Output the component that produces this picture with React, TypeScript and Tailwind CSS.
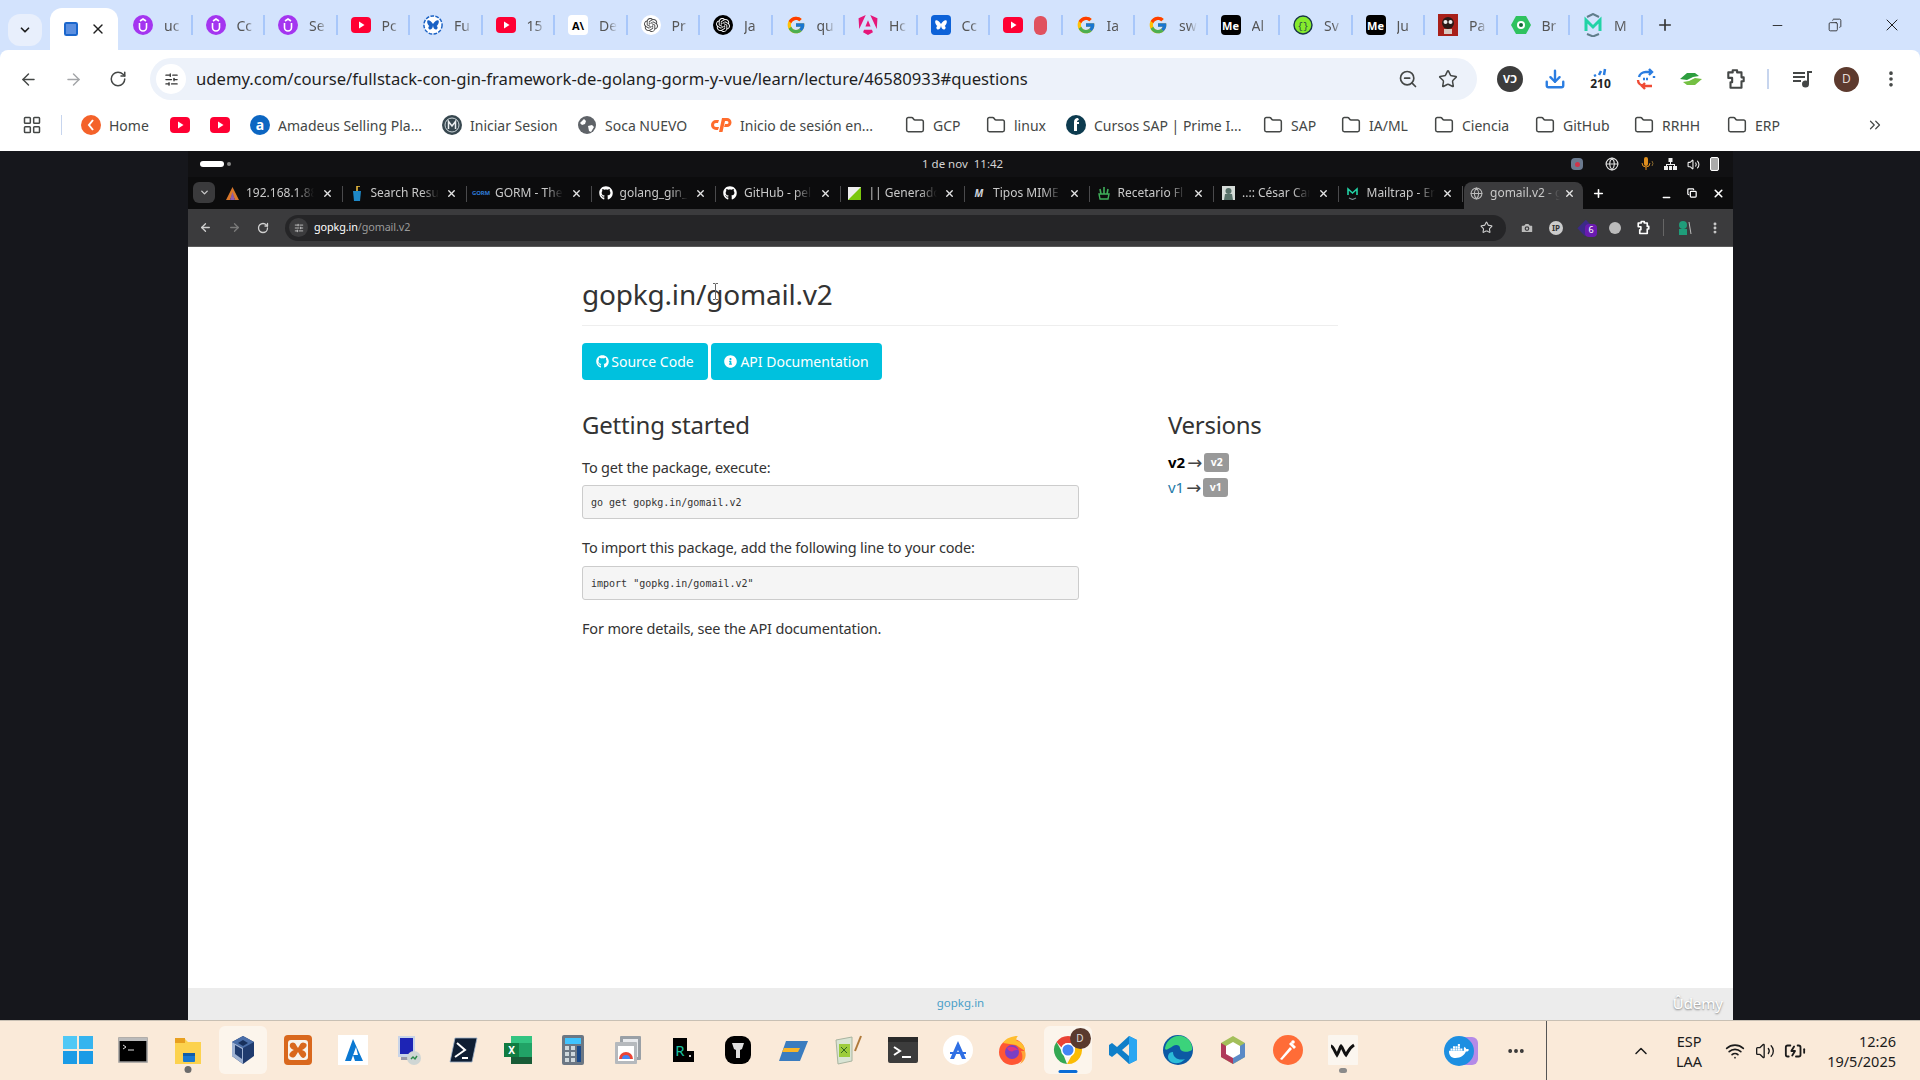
import React from 'react';
import { FaGithub, FaInfoCircle, FaDocker } from 'react-icons/fa';
import { FcGoogle } from 'react-icons/fc';
import { SiOpenai, SiAngular } from 'react-icons/si';
import {
  ArrowLeft, ArrowRight, RotateCw, ZoomOut, Star, ChevronDown, ChevronUp, X, Plus, Minus,
  Copy, LayoutGrid, Folder, SlidersHorizontal, MoreVertical, Download, ChevronsRight,
  Globe, Wifi, Volume2, BatteryCharging, MoreHorizontal, Camera, Square,
} from 'lucide-react';

const UI = "font-['Noto_Sans',sans-serif]";

const Yt = () => (
  <svg width="20" height="16" viewBox="0 0 20 16"><rect width="20" height="16" rx="4" fill="#ff0033" /><path d="M8 4.500 13.500 8 8 11.500z" fill="#fff" /></svg>
);
const Udemy = () => (
  <svg width="20" height="20" viewBox="0 0 20 20"><circle cx="10" cy="10" r="10" fill="#a435f0" /><path d="M6.500 8v4.500a3.500 3.500 0 0 0 7 0V8M7 6l3-2 3 2" fill="none" stroke="#fff" strokeWidth="1.600" /></svg>
);
const Butterfly = ({ ring }: { ring?: boolean }) => (
  <svg width="22" height="22" viewBox="0 0 22 22">
    {ring ? <circle cx="11" cy="11" r="10" fill="#fff" stroke="#1b62c4" strokeWidth="1.600" strokeDasharray="4 1.500" /> : <rect width="22" height="22" rx="4" fill="#0d62d8" />}
    <path d="M11 10C9 6 6 5 5 6s0 5 2 6c-2 1-1 4 1 4s3-3 3-5c0 2 1 5 3 5s3-3 1-4c2-1 3-5 2-6s-4 0-6 4z" fill={ring ? '#1b62c4' : '#fff'} />
  </svg>
);
const Square20 = ({ bg, fg, text }: { bg: string; fg: string; text: string }) => (
  <span className={`flex w-5 h-5 items-center justify-center rounded-sm text-[11px] font-bold leading-none ${bg} ${fg}`}>{text}</span>
);
const OpenAi = ({ dark }: { dark?: boolean }) => (
  <span className={`flex w-5 h-5 items-center justify-center rounded-full ${dark ? 'bg-black text-white' : 'bg-white text-[#444]'}`}><SiOpenai size={14} /></span>
);
const ExtPuzzle = ({ size, color, width }: { size: number; color: string; width: number }) => (
  <svg width={size} height={size} viewBox="0 0 20 20" fill="none" stroke={color} strokeWidth={width} strokeLinejoin="round">
    <path d="M3 4h4V2h4v2h4v4.500h2v3.500h-2v6H5v-5h1.500V9H3z" />
  </svg>
);

const tabs: { icon: React.ReactNode; text: string }[] = [
  { icon: <Udemy />, text: 'uc' },
  { icon: <Udemy />, text: 'Cc' },
  { icon: <Udemy />, text: 'Se' },
  { icon: <Yt />, text: 'Pc' },
  { icon: <Butterfly ring />, text: 'Fu' },
  { icon: <Yt />, text: '15' },
  { icon: <Square20 bg="bg-white" fg="text-black" text="A\" />, text: 'De' },
  { icon: <OpenAi />, text: 'Pr' },
  { icon: <OpenAi dark />, text: 'Ja' },
  { icon: <FcGoogle size={20} />, text: 'qu' },
  { icon: <SiAngular size={20} className="text-[#e5177a]" />, text: 'Hc' },
  { icon: <Butterfly />, text: 'Cc' },
  { icon: <Yt />, text: '' },
  { icon: <FcGoogle size={20} />, text: 'Ia' },
  { icon: <FcGoogle size={20} />, text: 'sw' },
  { icon: <Square20 bg="bg-black" fg="text-white" text="Me" />, text: 'Al' },
  {
    icon: <svg width="20" height="20" viewBox="0 0 20 20"><circle cx="10" cy="10" r="9" fill="#85ea2d" stroke="#173647" strokeWidth="1.400" /><text x="10" y="13.500" fontSize="9" textAnchor="middle" fill="#173647" fontFamily="Liberation Mono">{'{}'}</text></svg>,
    text: 'Sv',
  },
  { icon: <Square20 bg="bg-black" fg="text-white" text="Me" />, text: 'Ju' },
  {
    icon: <svg width="20" height="22" viewBox="0 0 20 22"><rect width="20" height="22" fill="#a8201a" /><circle cx="10" cy="9" r="6" fill="#2a1a18" /><circle cx="7.500" cy="8" r="2" fill="#eee" /><circle cx="12.500" cy="8" r="2" fill="#eee" /><path d="M6 15h8v5H6z" fill="#d8c8c0" /></svg>,
    text: 'Pa',
  },
  {
    icon: <svg width="20" height="22" viewBox="0 0 20 22"><path d="M5 2h10l5 9-5 9H5l-5-9z" fill="#2fc25f" /><circle cx="10" cy="11" r="4" fill="#fff" /><circle cx="10" cy="11" r="2" fill="#163" /></svg>,
    text: 'Br',
  },
  {
    icon: <svg width="20" height="24" viewBox="0 0 20 24"><path d="M3 18V7l7 7 7-7v11" fill="none" stroke="#22d3a6" strokeWidth="3" /><path d="M4 4l6-3 6 3M4 21l6 2.500 6-2.500" fill="none" stroke="#607d8b" strokeWidth="2" /></svg>,
    text: 'M',
  },
];

const innerTabs: { icon: React.ReactNode; text: string }[] = [
  { icon: <svg width="13" height="13" viewBox="0 0 13 13"><path d="M6.500 0 13 13H9L6.500 7 4 13H0z" fill="#d9772b" /><path d="M6.500 5 9 13H4z" fill="#8a5bb0" /></svg>, text: '192.168.1.88' },
  { icon: <svg width="10" height="15" viewBox="0 0 10 15"><path d="M1 5h8l-1 10H2z" fill="#1e88c7" /><path d="M5 5V0h3" fill="none" stroke="#f5c542" strokeWidth="1.500" /></svg>, text: 'Search Results' },
  { icon: <span className="text-[6px] font-bold text-[#2f7ad6] leading-none tracking-tight">GORM</span>, text: 'GORM - The' },
  { icon: <FaGithub size={14} className="text-white" />, text: 'golang_gin_' },
  { icon: <FaGithub size={14} className="text-white" />, text: 'GitHub - peli' },
  { icon: <svg width="13" height="13" viewBox="0 0 13 13"><rect width="13" height="13" fill="#eee" /><path d="M13 0v13H0z" fill="#7ac70c" /></svg>, text: '|| Generador' },
  { icon: <span className="text-[10px] font-bold italic text-gray-300 leading-none">M</span>, text: 'Tipos MIME' },
  { icon: <svg width="14" height="14" viewBox="0 0 14 14"><path d="M2 8h10l-1 5H3z" fill="none" stroke="#3fae5a" strokeWidth="1.400" /><path d="M7 8V1M4 8 3 3M10 8l1-5" stroke="#3fae5a" strokeWidth="1.600" /></svg>, text: 'Recetario Fl' },
  { icon: <svg width="13" height="14" viewBox="0 0 13 14"><rect width="13" height="14" fill="#d5dcd8" /><circle cx="6.500" cy="5" r="3" fill="#58726a" /><path d="M2 14l1-6h7l1 6z" fill="#58726a" /></svg>, text: '..:: César Can' },
  { icon: <svg width="13" height="14" viewBox="0 0 13 14"><path d="M2 9V3l4.500 4L11 3v6" fill="none" stroke="#22d3a6" strokeWidth="1.600" /><path d="M3 12l3.500 1.500L10 12" fill="none" stroke="#7a8a90" strokeWidth="1.200" /></svg>, text: 'Mailtrap - En' },
];

const folder = <Folder size={20} strokeWidth={1.8} className="text-[#444746]" />;

const bookmarks: { w: string; icon: React.ReactNode; text?: string }[] = [
  {
    w: 'w-[89px]',
    icon: <svg width="20" height="20" viewBox="0 0 20 20"><circle cx="10" cy="10" r="10" fill="#f4622a" /><path d="M12 5 8 10l4 5" fill="none" stroke="#fff" strokeWidth="2" /></svg>,
    text: 'Home',
  },
  { w: 'w-[40px]', icon: <Yt /> },
  { w: 'w-[40px]', icon: <Yt /> },
  {
    w: 'w-[192px]',
    icon: <svg width="20" height="20" viewBox="0 0 20 20"><circle cx="10" cy="10" r="10" fill="#0c66c2" /><text x="10" y="15" fontSize="14" fontWeight="bold" textAnchor="middle" fill="#fff" fontFamily="Noto Sans">a</text></svg>,
    text: 'Amadeus Selling Pla...',
  },
  {
    w: 'w-[135px]',
    icon: <svg width="20" height="20" viewBox="0 0 20 20"><circle cx="10" cy="10" r="10" fill="#37474f" /><circle cx="10" cy="10" r="7" fill="none" stroke="#cfd8dc" strokeWidth="1" /><path d="M6.500 14V6.500L10 11l3.500-4.500V14" fill="none" stroke="#eceff1" strokeWidth="1.500" /></svg>,
    text: 'Iniciar Sesion',
  },
  {
    w: 'w-[133px]',
    icon: <svg width="20" height="20" viewBox="0 0 20 20"><circle cx="10" cy="10" r="9" fill="#5f6368" /><path d="M3 8l4-4 2 2-1 3-3 1zM11 11l4-1 2 2-3 5-2-1z" fill="#fff" /></svg>,
    text: 'Soca NUEVO',
  },
  {
    w: 'w-[195px]',
    icon: <svg width="22" height="16" viewBox="0 0 22 16"><path d="M9 3H6a5 5 0 0 0 0 10h2l1-3H6a2 2 0 0 1 0-4h2z" fill="#ff6c2c" /><path d="M9 15 12 1h5a4.500 4.500 0 0 1 0 9h-3l1-3h2a1.500 1.500 0 0 0 0-3h-2l-2.500 11z" fill="#ff6c2c" /></svg>,
    text: 'Inicio de sesión en...',
  },
  { w: 'w-[81px]', icon: folder, text: 'GCP' },
  { w: 'w-[80px]', icon: folder, text: 'linux' },
  {
    w: 'w-[197px]',
    icon: <svg width="20" height="22" viewBox="0 0 20 22"><circle cx="10" cy="11" r="10" fill="#0d3b4f" /><path d="M12 4c-3 0-4 2-4 4v9h3V10h2V8h-2c0-1 .5-2 2-2z" fill="#fff" /></svg>,
    text: 'Cursos SAP | Prime I...',
  },
  { w: 'w-[78px]', icon: folder, text: 'SAP' },
  { w: 'w-[93px]', icon: folder, text: 'IA/ML' },
  { w: 'w-[101px]', icon: folder, text: 'Ciencia' },
  { w: 'w-[99px]', icon: folder, text: 'GitHub' },
  { w: 'w-[93px]', icon: folder, text: 'RRHH' },
  { w: 'w-[100px]', icon: folder, text: 'ERP' },
];

const Ic = ({ children }: { children: React.ReactNode }) => (
  <svg width="30" height="30" viewBox="0 0 30 30">{children}</svg>
);

const taskIcons: { node: React.ReactNode; tile?: boolean; dot?: string }[] = [
  { node: <Ic><path d="M0 1h14v13H0zM16 1h14v13H16zM0 16h14v13H0zM16 16h14v13H16z" fill="#1a9be6" /><path d="M0 1h14v13H0z" fill="#50c8f5" /><path d="M16 1h14v13H16z" fill="#35b4ef" /></Ic> },
  { node: <Ic><rect x="1" y="3" width="28" height="24" fill="#000" stroke="#9a9a9a" strokeWidth="1.500" /><rect x="1" y="3" width="28" height="3" fill="#bbb" /><path d="M5 10l3 2-3 2M10 15h6" stroke="#ddd" strokeWidth="1" fill="none" /></Ic> },
  { node: <Ic><path d="M2 4h10l3 3h13v22H2z" fill="#fcd24e" /><path d="M2 3h10v5H2z" fill="#e8a020" /><rect x="10" y="18" width="12" height="9" rx="1" fill="#1878d0" /><rect x="10" y="18" width="12" height="3" fill="#0f5da8" /></Ic>, dot: 'bg-[#6b6b6b]' },
  { node: <Ic><path d="M15 1l11 6v14l-11 8L4 21V7z" fill="#1f3b6e" /><path d="M15 1l11 6-11 6L4 7z" fill="#4a6ea8" /><path d="M15 13v16L4 21V7z" fill="#9fb3d4" /><path d="M15 5l5 3-5 3-5-3z" fill="#17305c" /><path d="M7 10l7 4v10l-7-5z" fill="#1f3b6e" /></Ic>, tile: true },
  { node: <Ic><rect x="1" y="0" width="28" height="30" rx="4" fill="#d9681d" /><rect x="5" y="5" width="20" height="20" rx="3" fill="#f7f3ec" /><path d="M8 8c4-2 5 2 7 5 2-3 3-7 7-5s0 6-3 7c3 1 6 4 3 7s-5-2-7-5c-2 3-3 7-7 5s0-6 3-7c-3-1-6-4-3-7z" fill="#d9681d" /></Ic> },
  { node: <Ic><rect width="30" height="30" fill="#fff" /><path d="M15 4 7 26h6l5-14 2 8h-5l2 6h8z" fill="#0a78d2" /></Ic> },
  { node: <Ic><rect x="5" y="1" width="17" height="21" fill="#c8d4e8" /><rect x="7" y="3" width="13" height="16" fill="#1d24b5" /><path d="M8 22h14l1 3H8z" fill="#99a" /><circle cx="21" cy="23" r="7" fill="#cfd6d4" /><path d="M18 24l2-2 2 2 2-3" stroke="#2a8a4a" strokeWidth="1.400" fill="none" /></Ic> },
  { node: <Ic><path d="M7 3h22l-5 24H2z" fill="#0f1e33" stroke="#9db2cc" strokeWidth="0.800" /><path d="M9 8l8 7-10 7" fill="none" stroke="#fff" strokeWidth="2" /><path d="M14 23h6" stroke="#fff" strokeWidth="2" /></Ic> },
  { node: <Ic><path d="M8 1h21v28H8z" fill="#21a366" /><path d="M8 1h21v7H8z" fill="#33c481" /><path d="M18 8h11v7H18z" fill="#21a366" /><path d="M8 22h21v7H8z" fill="#185c37" /><rect x="1" y="8" width="15" height="14" fill="#107c41" /><text x="8.500" y="19" fontSize="10" fontWeight="bold" textAnchor="middle" fill="#fff" fontFamily="Noto Sans">X</text></Ic> },
  { node: <Ic><rect x="4" y="0" width="22" height="30" rx="2" fill="#6b7784" /><rect x="7" y="3" width="16" height="6" fill="#40c4ff" /><path d="M7 11h4v4H7zM13 11h4v4h-4zM7 17h4v4H7zM13 17h4v4h-4zM7 23h4v4H7zM13 23h4v4h-4z" fill="#cfd8dc" /><path d="M19 11h4v16h-4z" fill="#1a4a8a" /></Ic> },
  { node: <Ic><rect x="7" y="1" width="21" height="24" rx="1" fill="#9aa0a6" /><rect x="10" y="4" width="15" height="18" fill="#e8eaed" /><rect x="2" y="7" width="22" height="22" rx="1" fill="#b5b9bd" /><rect x="5" y="11" width="16" height="15" fill="#fff" /><path d="M6 24a7 7 0 0 1 14 0z" fill="#ea4335" /><path d="M9 24a4 4 0 0 1 8 0z" fill="#4285f4" /></Ic> },
  { node: <Ic><rect x="5" y="3" width="14" height="24" fill="#000" /><rect x="19" y="16" width="7" height="11" fill="#000" /><text x="12" y="21" fontSize="15" textAnchor="middle" fill="#18c3a0" fontFamily="Noto Sans">R</text><rect x="21" y="20" width="2" height="2" fill="#ccc" /></Ic> },
  { node: <Ic><rect x="2" y="1" width="26" height="28" rx="9" fill="#000" /><path d="M9 8h12l-2 6-2 1v8h-4v-8l-2-1z" fill="#ddd" /></Ic> },
  { node: <Ic><path d="M8 6h22l-8 20H1z" fill="#3a7cbf" /><path d="M6 13h16l-2 4H4z" fill="#f7b52a" /></Ic> },
  { node: <Ic><path d="M3 5l16-3v24l-14 3z" fill="#d9e4d4" stroke="#a8b4a0" /><rect x="6" y="9" width="11" height="13" fill="#9ccc3c" /><path d="M8 12l6 6M14 12l-6 6" stroke="#336622" /><path d="M22 16 28 1" stroke="#b07a3a" strokeWidth="2" /></Ic> },
  { node: <Ic><rect x="0" y="2" width="30" height="26" rx="2" fill="#3c3c3c" /><rect x="0" y="2" width="30" height="5" fill="#2a2a2a" /><path d="M6 12l6 4-6 4" fill="none" stroke="#fff" strokeWidth="2" /><path d="M14 22h9" stroke="#fff" strokeWidth="2" /></Ic> },
  { node: <Ic><circle cx="15" cy="15" r="15" fill="#fff" /><path d="M15 6l8 18h-4l-4-9-4 9H7z" fill="#2f6fe4" /><path d="M7 18h16" stroke="#2f6fe4" strokeWidth="2" /></Ic> },
  {
    node: (
      <Ic>
        <circle cx="14" cy="17" r="13" fill="#ff5634" />
        <path d="M5 8c3-5 9-7 15-7-2 2-2 4-1 5 4 0 8 5 8 10l-9-6z" fill="#ffbd2e" />
        <path d="M27 16c2 6-1 11-5 13 3-4 3-9 1-13z" fill="#ffa436" />
        <circle cx="14" cy="17" r="7" fill="#7b3fc4" />
        <path d="M9 13c3-2 8-2 11 2-2 0-4 0-5 1s-4 1-6-3z" fill="#e0357e" />
      </Ic>
    ),
  },
  {
    node: (
      <span className="relative block w-[30px] h-[30px]">
        <svg width="30" height="30" viewBox="0 0 30 30">
          <path d="M15 1a14 14 0 0 1 12 7H15a7 7 0 0 0-6.500 4.500L3.500 7A14 14 0 0 1 15 1z" fill="#ea4335" />
          <path d="M3.500 7l6.200 11 4.300 10.900A14 14 0 0 1 3.500 7z" fill="#34a853" />
          <path d="M27 8a14 14 0 0 1-13 21l6-11a7 7 0 0 0 0-10z" fill="#fbbc05" />
          <circle cx="15" cy="15" r="7" fill="#fff" />
          <circle cx="15" cy="15" r="5.500" fill="#4285f4" />
        </svg>
        <span className="absolute -top-[7px] -right-[8px] w-[21px] h-[21px] rounded-full bg-[#5a3a2e] text-[#ddd] text-[10px] flex items-center justify-center">D</span>
      </span>
    ),
    tile: true,
    dot: 'bg-[#0a6cd6] w-[19px]! h-[3px]! rounded-full',
  },
  {
    node: (
      <Ic>
        <path d="M21 1 29 5v20l-8 4L9 18l-5 4-3-2v-10l3-2 5 4z" fill="#0f7fc9" />
        <path d="M21 1 29 5v20l-8 4z" fill="#2aa6f2" />
        <path d="M21 9 14 15l7 6z" fill="#faead9" />
      </Ic>
    ),
  },
  { node: <Ic><circle cx="15" cy="15" r="15" fill="#0c59a4" /><path d="M2 13C4 4 12 0 18 1c7 1 12 7 11 14-4 3-12 2-12-2 0-3-4-4-7-2S2 17 2 13z" fill="#3bd37b" /><path d="M10 17c0 6 6 9 12 7-4 5-12 6-16 1-2-3-1-8 4-8z" fill="#2bbcd8" /></Ic> },
  { node: <Ic><path d="M15 1l12 7v14l-12 7-12-7V8z" fill="#a3bf5a" /><path d="M3 8v14l12 7V15z" fill="#b03a5b" /><path d="M27 8v14l-12 7V15z" fill="#5a8ac6" /><path d="M15 7l7 4v8l-7 4-7-4v-8z" fill="#fff" /></Ic> },
  {
    node: (
      <Ic>
        <circle cx="15" cy="15" r="15" fill="#ff6c37" />
        <path d="M7 24 17 12l2 2L9 25z" fill="#fff" />
        <path d="M16 9l2-2 5 5-2 2z" fill="#fff" />
        <circle cx="20" cy="7" r="1.800" fill="#fff" />
      </Ic>
    ),
  },
  { node: <Ic><rect x="-1" y="0" width="32" height="30" rx="3" fill="#fbf6ef" /><path d="M3 11c2 0 4 6 6 9 2-3 3-8 4-9 2 2 3 7 5 9 2-3 3-7 8-10" fill="none" stroke="#111" strokeWidth="3" /></Ic>, dot: 'bg-[#8a8a8a] h-[5px]! w-[8px]!' },
];

const SourceLine = ({ children }: { children: React.ReactNode }) => (
  <pre className="h-[34px] flex items-center px-[8px] bg-[#f5f5f5] border border-[#cccccc] rounded-[3px] font-['DejaVu_Sans_Mono',monospace] text-[10px] text-[#333]">{children}</pre>
);

export default function App() {
  return (
    <div className={`w-[1920px] h-[1080px] overflow-hidden flex flex-col bg-[#16171c] ${UI}`}>
      {/* windows chrome */}
      <div className="bg-[#d3e3fd] shrink-0">
        <div className="h-[50px] flex items-end text-[#444746]">
          <div className="w-[34px] h-[32px] ml-2 mb-[4px] rounded-xl bg-[#e8effc] flex items-center justify-center">
            <ChevronDown size={14} strokeWidth={3} className="text-[#1f1f1f]" />
          </div>
          <div className="w-[68px] h-[42px] ml-2 bg-white rounded-t-xl flex items-center gap-[11px] pl-[13px]">
            <Square size={16} strokeWidth={3} className="text-[#1a66cc] fill-[#5b8fe0]" />
            <X size={16} strokeWidth={2} className="text-[#1f1f1f]" />
          </div>
          <div className="w-[2px]" />
          <div className="flex h-[50px] items-center">
            {tabs.map((t, i) => (
              <div key={i} className="w-[72.5px] h-[50px] flex items-center pl-[13px] gap-[11px] relative">
                <span className="flex w-[20px] justify-center shrink-0">{t.icon}</span>
                {t.text ? (
                  <span className="w-[18px] overflow-hidden whitespace-nowrap text-[14px] text-[#555] [mask-image:linear-gradient(to_right,black_50%,transparent)]">{t.text}</span>
                ) : (
                  <span className="w-[13px] h-[19px] rounded-md bg-[#e0525f]" />
                )}
                <span className="absolute right-0 top-[15px] h-[20px] w-[2px] bg-[#a8c7fa]" />
              </div>
            ))}
          </div>
          <div className="h-[50px] w-[44px] flex items-center justify-center">
            <Plus size={18} strokeWidth={2.2} className="text-[#333]" />
          </div>
          <div className="h-[50px] flex-1 flex items-center justify-end text-[#1f1f1f]">
            <div className="w-[57px] flex justify-center"><Minus size={15} strokeWidth={1.4} /></div>
            <div className="w-[57px] flex justify-center"><Copy size={14} strokeWidth={1.4} className="-scale-x-100" /></div>
            <div className="w-[57px] flex justify-center"><X size={20} strokeWidth={1.2} /></div>
          </div>
        </div>

        <div className="bg-white rounded-t-lg">
          <div className="h-[52px] pt-[8px] flex items-start text-[#444746]">
            <div className="w-[150px] h-[42px] flex items-center pl-[19px] gap-[26px]">
              <ArrowLeft size={19} strokeWidth={1.8} />
              <ArrowRight size={19} strokeWidth={1.8} className="text-[#a3a5a8]" />
              <RotateCw size={18} strokeWidth={2} />
            </div>
            <div className="w-[1327px] h-[42px] rounded-full bg-[#edf2fa] flex items-center pl-[6px]">
              <span className="w-[30px] h-[30px] rounded-full bg-white flex items-center justify-center">
                <SlidersHorizontal size={15} className="text-[#333] -scale-x-100" />
              </span>
              <span className="ml-[10px] text-[16.65px] text-[#1f1f1f] whitespace-nowrap">udemy.com/course/fullstack-con-gin-framework-de-golang-gorm-y-vue/learn/lecture/46580933#questions</span>
              <div className="ml-auto flex items-center gap-[20px] pr-[19px]">
                <ZoomOut size={20} strokeWidth={2} />
                <Star size={20} strokeWidth={1.8} />
              </div>
            </div>
            <div className="flex-1 h-[42px] flex items-center pl-[20px]">
              <span className="w-[26px] h-[26px] rounded-full bg-[#3c3c3c] text-white text-[11px] font-bold flex items-center justify-center">VƆ</span>
              <span className="w-[46px] flex justify-center ml-[9px]"><Download size={22} strokeWidth={2.6} className="text-[#2a7de1]" /></span>
              <span className="w-[45px] flex flex-col items-center leading-none">
                <svg width="16" height="10" viewBox="0 0 16 10"><path d="M1 9l2-1M6 8 8 4M11 8l1-6" fill="none" stroke="#2a7de1" strokeWidth="2.500" /></svg>
                <span className="text-[12px] font-bold text-[#222] leading-[14px]">210</span>
              </span>
              <span className="w-[45px] flex justify-center">
                <svg width="20" height="22" viewBox="0 0 20 22" fill="none" strokeWidth="2.400">
                  <path d="M3 9a7 6 0 0 1 7-5h6M13 1l3 3-3 3M18 8v2" stroke="#2a7de1" />
                  <path d="M2 12a7 6 0 0 0 6 6h8M9 15l-3 3 3 3" stroke="#ef4b35" />
                  <path d="M7 11h6" stroke="#2a7de1" strokeDasharray="2 1" />
                </svg>
              </span>
              <span className="w-[45px] flex justify-center">
                <svg width="22" height="14" viewBox="0 0 22 14"><path d="M0 7 7 1h8l4 3-6 1-6 3z" fill="#2e9e3f" /><path d="M22 7l-7 6H7L3 10l6-1 6-3z" fill="#74c043" /></svg>
              </span>
              <span className="w-[46px] flex justify-center"><ExtPuzzle size={22} color="#444746" width={1.9} /></span>
              <span className="w-[2px] h-[20px] bg-[#c7d5ee] mx-[8px]" />
              <span className="w-[52px] flex justify-center">
                <svg width="20" height="18" viewBox="0 0 20 18" fill="none" stroke="#444746" strokeWidth="2"><path d="M0 3h12M0 7h12M0 11h8" /><path d="M15 14V2h4" /><circle cx="12.500" cy="14" r="2.500" fill="#444746" /></svg>
              </span>
              <span className="w-[25px] h-[25px] rounded-full bg-[#5d3a2e] text-[#e6dcd6] text-[12px] flex items-center justify-center mx-[5px]">D</span>
              <span className="w-[54px] flex justify-center"><MoreVertical size={20} strokeWidth={2.4} /></span>
            </div>
          </div>

          <div className="h-[49px] pb-[3px] flex items-center text-[14px] text-[#444746]">
            <div className="w-[61px] pl-[22px]"><LayoutGrid size={20} strokeWidth={1.8} /></div>
            <span className="w-[1px] h-[20px] bg-[#c7d5ee] mr-[19px]" />
            {bookmarks.map((b, i) => (
              <div key={i} className={`${b.w} flex items-center gap-[8px] whitespace-nowrap shrink-0`}>
                {b.icon}
                {b.text && <span>{b.text}</span>}
              </div>
            ))}
            <ChevronsRight size={18} strokeWidth={1.6} className="ml-[39px]" />
          </div>
        </div>
      </div>

      {/* recorded screen */}
      <div className="flex-1 flex min-h-0 pl-[188px]">
        <div className="w-[1545px] flex flex-col bg-white">
          <div className="h-[26px] bg-[#111113] flex items-center justify-between pl-[12px] pr-[14px] text-[11.5px] text-[#d5d5d5] relative">
            <div className="flex items-center gap-[3px]">
              <span className="w-[24px] h-[6px] rounded-full bg-white" />
              <span className="w-[4px] h-[4px] rounded-full bg-[#888]" />
            </div>
            <span className="absolute left-[734px] whitespace-pre">1 de nov  11:42</span>
            <div className="flex items-center text-white">
              <span className="w-[12px] h-[12px] bg-[#6b7a8f] rounded-sm flex items-center justify-center"><span className="w-[5px] h-[5px] rounded-full bg-[#d0344a]" /></span>
              <Globe size={14} className="text-[#ddd] ml-[22px]" />
              <svg width="13" height="14" viewBox="0 0 13 14" className="ml-[22px]" fill="none"><rect x="3" y="0" width="4" height="9" rx="2" fill="#e08f1e" /><path d="M1 6a4 4 0 0 0 8 0M5 10v3" stroke="#e08f1e" /><path d="M11 4a4 4 0 0 1 0 5" stroke="#8a6a30" /></svg>
              <svg width="13" height="12" viewBox="0 0 13 12" className="ml-[10px]"><path d="M4.500 0h4v4h-4zM6 4h1v2H6zM2 6h9v2h-1V7H3v1H2zM0 8h4v4H0zM9 8h4v4H9zM5 8h3v4H5z" fill="#eee" /></svg>
              <Volume2 size={13} className="text-[#eee] ml-[10px]" />
              <span className="w-[9px] h-[14px] border border-white rounded-[2px] bg-[#aaa] ml-[10px]" />
            </div>
          </div>

          <div className="h-[32px] bg-[#0c0c0d] flex items-end text-[12px] text-[#c9c9c9] relative">
            <div className="w-[22px] h-[21px] ml-[5px] mb-[6px] rounded-md bg-[#3a3a3c] flex items-center justify-center">
              <ChevronDown size={11} strokeWidth={3} />
            </div>
            <div className="w-[3px]" />
            {innerTabs.map((t, i) => (
              <div key={i} className="w-[124.500px] h-[32px] flex items-center pl-[7px] relative shrink-0">
                <span className="w-[14px] flex justify-center shrink-0">{t.icon}</span>
                <span className="ml-[7px] w-[68px] overflow-hidden whitespace-nowrap [mask-image:linear-gradient(to_right,black_75%,transparent)]">{t.text}</span>
                <X size={11} strokeWidth={3} className="absolute right-[10px] text-[#e5e5e5]" />
                <span className="absolute right-0 top-[9px] h-[16px] w-[1px] bg-[#4a4a4c]" />
              </div>
            ))}
            <div className="w-[119px] h-[27px] pb-[5px] bg-[#3b3b3d] rounded-t-lg flex items-center pl-[6px] relative shrink-0 ml-[1px]">
              <Globe size={13} className="text-[#bbb] shrink-0" />
              <span className="ml-[7px] w-[70px] overflow-hidden whitespace-nowrap [mask-image:linear-gradient(to_right,black_75%,transparent)]">gomail.v2 - gopkg</span>
              <X size={11} strokeWidth={3} className="absolute right-[8px] top-[6px] text-[#e5e5e5]" />
            </div>
            <div className="h-[32px] w-[30px] flex items-center justify-center"><Plus size={13} strokeWidth={3} className="text-white" /></div>
            <div className="flex-1 h-[32px] flex items-center justify-end pr-[2px] text-white">
              <span className="w-[26px] flex justify-center"><Minus size={11} strokeWidth={3} className="translate-y-[4px]" /></span>
              <span className="w-[26px] flex justify-center"><Copy size={10} strokeWidth={3} /></span>
              <span className="w-[26px] flex justify-center"><X size={13} strokeWidth={3} /></span>
            </div>
          </div>

          <div className="h-[38px] bg-[#3b3b3d] flex items-center text-[#d0d0d0] border-b border-[#5a5a5a]">
            <div className="w-[97px] flex items-center pl-[11px] gap-[16px]">
              <ArrowLeft size={13} strokeWidth={2.4} />
              <ArrowRight size={13} strokeWidth={2.4} className="text-[#7a7a7a]" />
              <RotateCw size={12} strokeWidth={2.6} />
            </div>
            <div className="w-[1221px] h-[26px] rounded-full bg-[#252527] flex items-center pl-[4px]">
              <span className="w-[19px] h-[19px] rounded-full bg-[#3b3b3d] flex items-center justify-center"><SlidersHorizontal size={10} className="-scale-x-100" /></span>
              <span className="ml-[6px] text-[10.8px] tracking-[-0.1px] text-white whitespace-nowrap">gopkg.in<span className="text-[#9a9a9a]">/gomail.v2</span></span>
              <Star size={13} strokeWidth={2} className="ml-auto mr-[13px]" />
            </div>
            <div className="flex-1 flex items-center pl-[7px]">
              <span className="w-[28px] flex justify-center"><Camera size={14} className="fill-[#bbb] text-[#3b3b3d]" /></span>
              <span className="w-[30px] flex justify-center"><span className="w-[14px] h-[14px] rounded-full bg-[#ccc] text-[8px] font-bold text-[#333] flex items-center justify-center">IP</span></span>
              <span className="w-[29px] flex justify-center relative">
                <span className="w-[11px] h-[12px] bg-[#3c2a88] rotate-45" />
                <span className="absolute left-[14px] top-[2px] w-[12px] h-[13px] bg-[#6a1bb0] text-white text-[9px] flex items-center justify-center rounded-sm">6</span>
              </span>
              <span className="w-[29px] flex justify-center"><span className="w-[12px] h-[12px] rounded-full bg-[#bbb]" /></span>
              <span className="w-[29px] flex justify-center"><ExtPuzzle size={15} color="#fff" width={2.2} /></span>
              <span className="w-[1px] h-[17px] bg-[#666] mx-[5px]" />
              <span className="w-[30px] flex justify-center">
                <svg width="15" height="16" viewBox="0 0 15 16"><circle cx="6" cy="5" r="4" fill="#1f9d7a" /><path d="M2 9h8v6H2z" fill="#1f9d7a" /><path d="M12 2l2 12" stroke="#bbb" /></svg>
              </span>
              <MoreVertical size={14} strokeWidth={3} className="ml-[9px]" />
            </div>
          </div>

          {/* gopkg page */}
          <div className="flex-1 min-h-0 pl-[394px] font-['Noto_Sans',sans-serif] text-[#333]">
            <div className="w-[756px]">
              <div className="relative">
                <h1 className="pt-[28px] h-[79px] border-b border-[#eeeeee] text-[28px] leading-[38px] tracking-[-0.2px]">gopkg.in/gomail.v2</h1>
                <svg width="7" height="17" viewBox="0 0 7 17" className="absolute left-[130px] top-[36px]" fill="none" stroke="#666"><path d="M1 .5h2l.5.5.5-.5h2M3.500 1v15M1 16.500h2l.5-.5.5.5h2" /></svg>
              </div>
              <div className="mt-[17px] flex gap-[3px] text-[14px] text-white">
                <a className="w-[126px] h-[37px] rounded-[4px] bg-[#00c1de] flex items-center justify-center gap-[2px]"><FaGithub size={13} />Source Code</a>
                <a className="w-[171px] h-[37px] rounded-[4px] bg-[#00c1de] flex items-center justify-center gap-[3px]"><FaInfoCircle size={13} />API Documentation</a>
              </div>
              <div className="mt-[27px] flex">
                <div className="w-[497px]">
                  <h2 className="text-[24px] leading-[36px] tracking-[-0.2px]">Getting started</h2>
                  <p className="mt-[14px] h-[20px] text-[14.500px] leading-[20px] tracking-[-0.17px]">To get the package, execute:</p>
                  <div className="mt-[8px]"><SourceLine>go get gopkg.in/gomail.v2</SourceLine></div>
                  <p className="mt-[18px] h-[20px] text-[14.500px] leading-[20px] tracking-[-0.17px]">To import this package, add the following line to your code:</p>
                  <div className="mt-[9px]"><SourceLine>import "gopkg.in/gomail.v2"</SourceLine></div>
                  <p className="mt-[18px] h-[20px] text-[14.500px] leading-[20px] tracking-[-0.17px]">For more details, see the API documentation.</p>
                </div>
                <div className="ml-[89px]">
                  <h2 className="text-[24px] leading-[36px] tracking-[-0.3px]">Versions</h2>
                  <div className="mt-[7px] flex items-center h-[25px] text-[15px]">
                    <b className="text-black">v2</b><span className="mx-[2px] text-[#444] text-[18px] leading-[25px] font-['DejaVu_Sans',sans-serif]">→</span>
                    <span className="w-[25px] h-[19px] rounded-[3px] bg-[#999] text-white text-[10.500px] font-bold flex items-center justify-center">v2</span>
                  </div>
                  <div className="flex items-center h-[25px] text-[15px]">
                    <span className="text-[#1e7ba8]">v1</span><span className="mx-[2px] text-[#444] text-[18px] leading-[25px] font-['DejaVu_Sans',sans-serif]">→</span>
                    <span className="w-[25px] h-[19px] rounded-[3px] bg-[#999] text-white text-[10.500px] font-bold flex items-center justify-center">v1</span>
                  </div>
                </div>
              </div>
            </div>
          </div>

          <div className="h-[32px] pb-[2px] bg-[#ececec] flex items-center justify-center relative">
            <span className="text-[11.5px] text-[#4a9fc8]">gopkg.in</span>
            <span className="absolute right-[10px] text-[15px] text-white [text-shadow:0_1px_2px_#777]">Ûdemy</span>
          </div>
        </div>
      </div>

      {/* taskbar */}
      <div className="h-[60px] shrink-0 bg-[#faead9] border-t border-[#c8c0b4] flex items-center relative">
        <div className="flex pl-[50px] h-full items-start pt-[5px]">
          {taskIcons.map((t, i) => (
            <div key={i} className="w-[55px] h-[48px] flex items-center justify-center relative">
              {t.tile && <span className="absolute left-[4px] top-0 w-[48px] h-[48px] rounded-md bg-[#fcf5ec]" />}
              <span className="relative flex">{t.node}</span>
              {t.dot && <span className={`absolute bottom-[1px] left-1/2 -translate-x-1/2 w-[7px] h-[7px] rounded-full ${t.dot}`} />}
            </div>
          ))}
        </div>
        <div className="ml-[74px] flex items-center">
          <span className="relative w-[34px] h-[30px] flex items-center">
            <span className="absolute left-[20px] w-[14px] h-[28px] bg-[#b48ae8] rounded-r-md" />
            <span className="absolute left-0 w-[30px] h-[30px] rounded-full bg-[#1d8fe1] flex items-center justify-center"><FaDocker size={20} className="text-white" /></span>
          </span>
          <MoreHorizontal size={20} strokeWidth={2.6} className="ml-[28px] text-[#333]" />
        </div>
        <div className="absolute left-[1546px] top-0 bottom-0 w-[1px] bg-[#555]" />
        <div className="absolute right-[24px] left-[1547px] top-0 bottom-0 flex items-center text-[14.5px] text-[#1b1b1b]">
          <ChevronUp size={20} strokeWidth={1.8} className="ml-[84px]" />
          <div className="ml-[25px] text-center leading-[20px]"><div>ESP</div><div>LAA</div></div>
          <Wifi size={20} strokeWidth={2} className="ml-[23px]" />
          <Volume2 size={20} strokeWidth={1.6} className="ml-[10px]" />
          <BatteryCharging size={22} strokeWidth={2} className="ml-[9px]" />
          <div className="ml-auto text-right leading-[20px]"><div>12:26</div><div>19/5/2025</div></div>
        </div>
      </div>
    </div>
  );
}
